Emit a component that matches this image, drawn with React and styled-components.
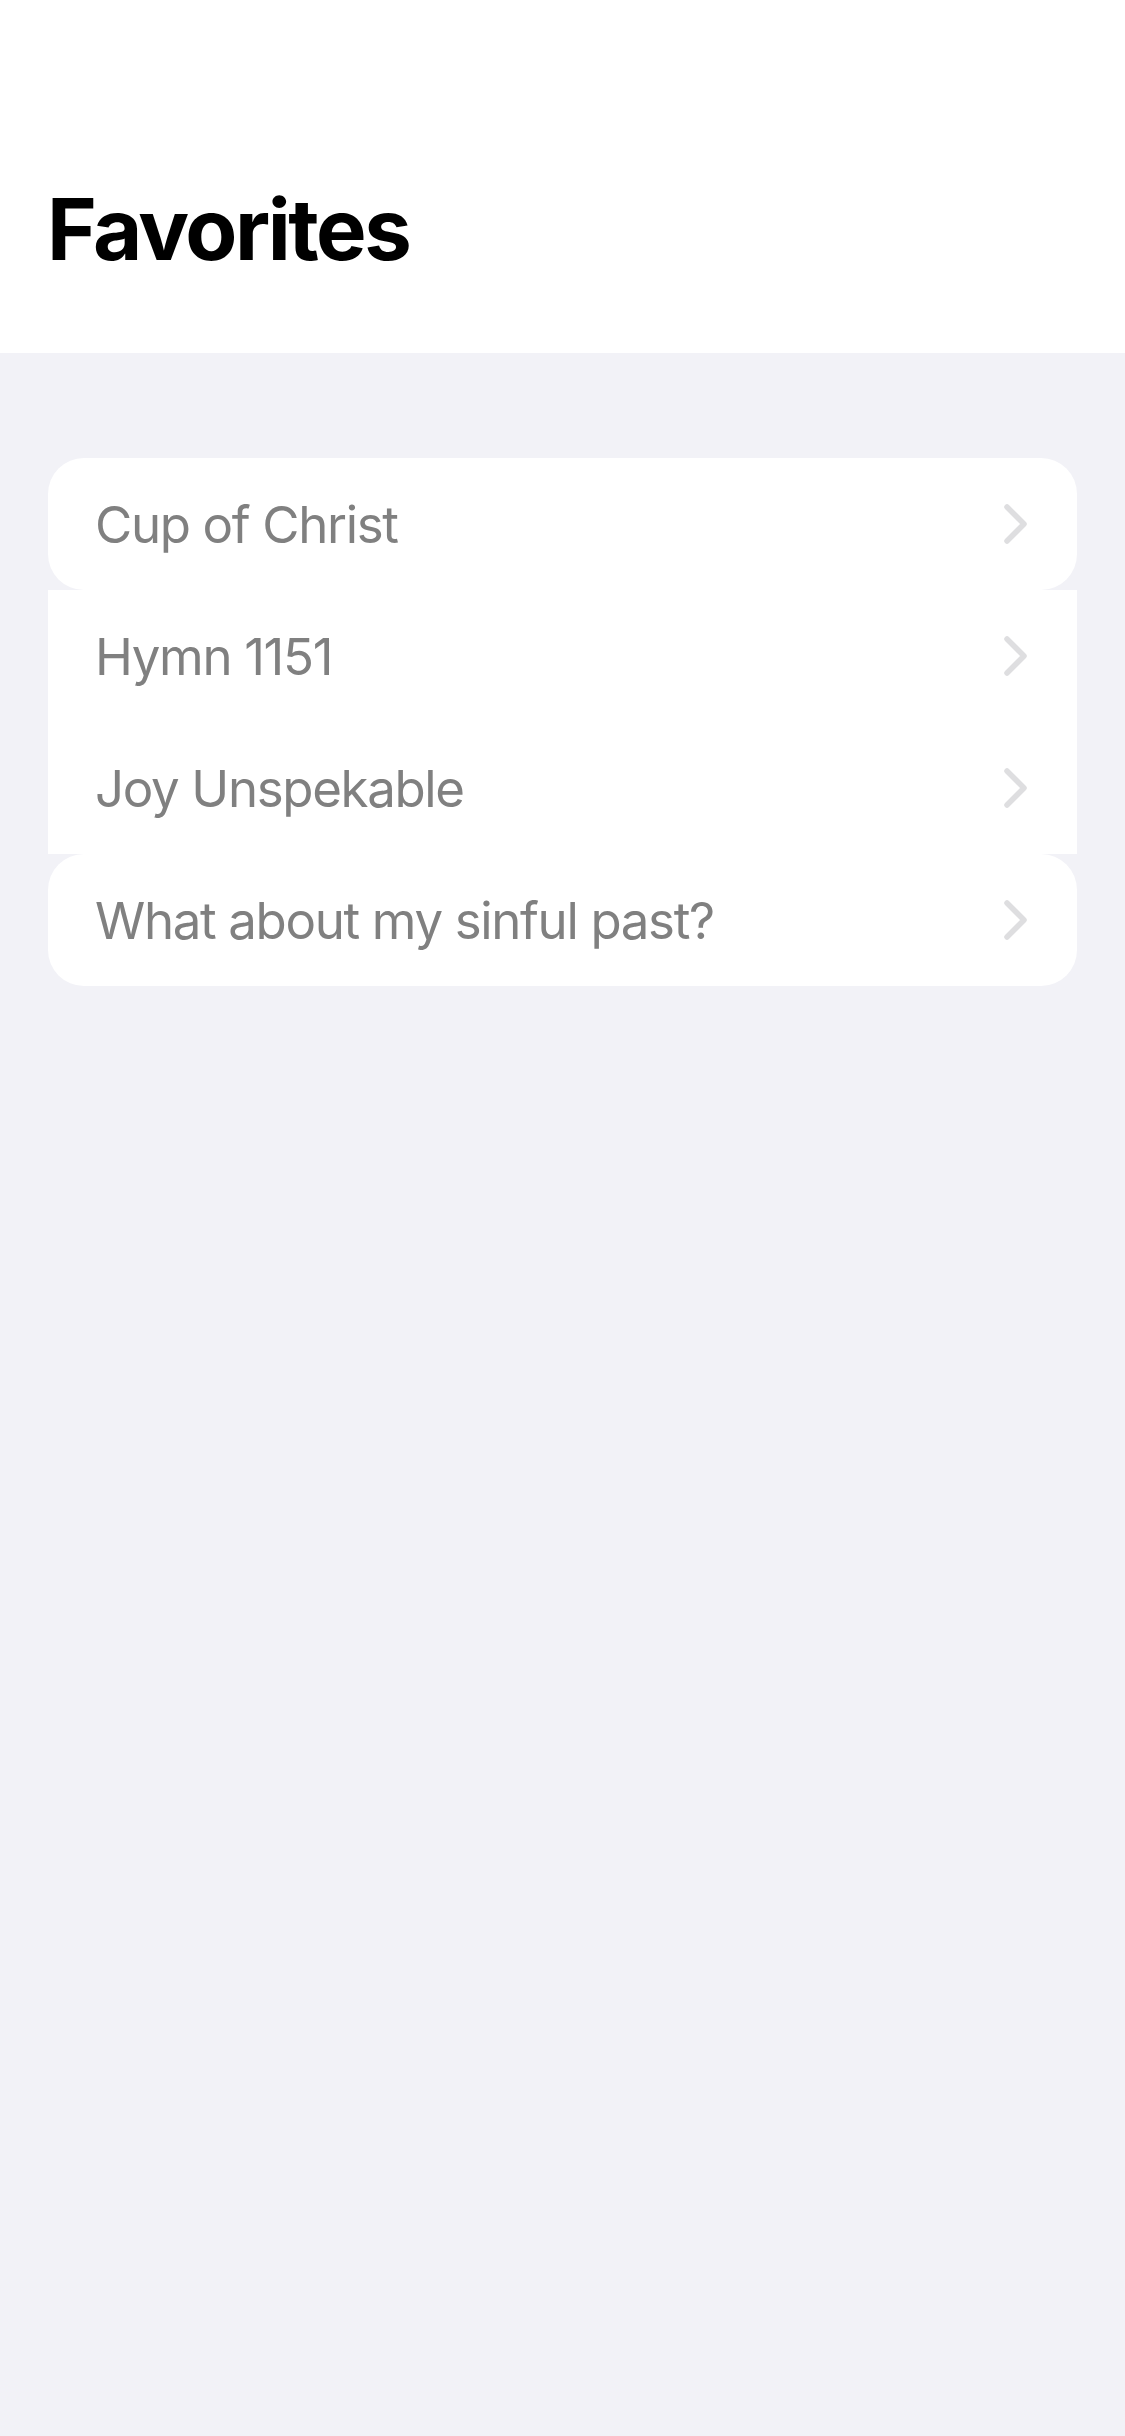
import styled, { createGlobalStyle } from "styled-components";

const GlobalStyle = createGlobalStyle`
  html, body {
    margin: 0;
    padding: 0;
    background-color: #f2f2f7;
  }
  body {
    font-family: Inter, "Noto Sans", "Liberation Sans", sans-serif;
    -webkit-font-smoothing: antialiased;
  }
`

const Screen = styled.div`
  min-height: 2436px;
  background-color: #f2f2f7;
`

const Header = styled.header`
  height: 353px;
  background-color: #fff;
  box-sizing: border-box;
  padding: 187px 0 0 47px;
`

const Title = styled.h1`
  margin: 0;
  color: #000;
  font-size: 85px;
  line-height: 85px;
  font-weight: 700;
  letter-spacing: -2.5px;
`

const List = styled.div`
  display: flex;
  flex-direction: column;
  padding: 105px 48px 0;
`

const Section = styled.div`
  background-color: #fff;
  border-radius: ${(p) => (p.$rounded ? "36px" : "0")};
  overflow: hidden;
`

const Row = styled.div`
  height: 132px;
  display: flex;
  align-items: center;
  justify-content: space-between;
  padding: 0 48px 0 47px;
`

const Label = styled.span`
  color: #808080;
  font-size: 51px;
  font-weight: 400;
  letter-spacing: -1.35px;
`

const Chevron = () => (
  <svg width="28" height="42" viewBox="0 0 28 42">
    <polyline
      points="6,4 23,21 6,38"
      fill="none"
      stroke="#dedee0"
      strokeWidth="5.5"
      strokeLinecap="round"
      strokeLinejoin="round"
    />
  </svg>
)

const sections = [
  { rounded: true, items: ["Cup of Christ"] },
  { rounded: false, items: ["Hymn 1151", "Joy Unspekable"] },
  { rounded: true, items: ["What about my sinful past?"] },
]

export default function App() {
  return (
    <Screen>
      <GlobalStyle />
      <Header>
        <Title>Favorites</Title>
      </Header>
      <List>
        {sections.map((section, i) => (
          <Section key={i} $rounded={section.rounded}>
            {section.items.map((item) => (
              <Row key={item}>
                <Label>{item}</Label>
                <Chevron />
              </Row>
            ))}
          </Section>
        ))}
      </List>
    </Screen>
  );
}
